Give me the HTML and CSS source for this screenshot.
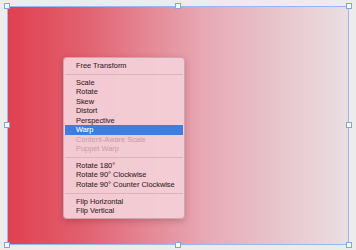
FILE: index.html
```html
<!DOCTYPE html>
<html>
<head>
    <title>Transform</title>
    <link rel="stylesheet" href="styles.css">
</head>
<body>
    <div class="canvas">
        <span class="handle h-tl"></span>
        <span class="handle h-tm"></span>
        <span class="handle h-tr"></span>
        <span class="handle h-ml"></span>
        <span class="handle h-mr"></span>
        <span class="handle h-bl"></span>
        <span class="handle h-bm"></span>
        <span class="handle h-br"></span>

        <ul class="context-menu">
            <li>Free Transform</li>
            <li class="sep"></li>
            <li>Scale</li>
            <li>Rotate</li>
            <li>Skew</li>
            <li>Distort</li>
            <li>Perspective</li>
            <li class="active">Warp</li>
            <li class="disabled">Content-Aware Scale</li>
            <li class="disabled">Puppet Warp</li>
            <li class="sep"></li>
            <li>Rotate 180°</li>
            <li>Rotate 90° Clockwise</li>
            <li>Rotate 90° Counter Clockwise</li>
            <li class="sep"></li>
            <li>Flip Horizontal</li>
            <li>Flip Vertical</li>
        </ul>
    </div>
</body>
</html>
```

FILE: styles.css
```css
body {
    margin: 0;
    padding: 6px 7px;
    background-color: #ececec;
    font-family: "Liberation Sans", Arial, sans-serif;
}
.canvas {
    position: relative;
    width: 340px;
    height: 237px;
    border: 1px solid #9db5f0;
    background: linear-gradient(to right, #e1404f 0%, #e2606f 22%, #e7a9b4 58%, #e9dfe1 100%);
}
.handle {
    position: absolute;
    width: 4px;
    height: 4px;
    background: #fafafa;
    border: 1px solid #8aa2d6;
}
.h-tl { left: -4px; top: -4px; }
.h-tm { left: 167px; top: -4px; }
.h-tr { right: -4px; top: -4px; }
.h-ml { left: -4px; top: 115px; }
.h-mr { right: -4px; top: 115px; }
.h-bl { left: -4px; bottom: -4px; }
.h-bm { left: 167px; bottom: -4px; }
.h-br { right: -4px; bottom: -4px; }

.context-menu {
    position: absolute;
    left: 55px;
    top: 50px;
    width: 118px;
    margin: 0;
    padding: 3px 1px 2px;
    list-style: none;
    background: rgba(244, 206, 214, 0.96);
    border: 0.5px solid rgba(150, 90, 100, 0.35);
    border-radius: 4px;
    box-shadow: 0 2px 6px rgba(80, 20, 30, 0.25);
    font-size: 7.4px;
    color: #3b2529;
}
.context-menu li {
    height: 9.55px;
    line-height: 9.55px;
    padding-left: 11px;
    white-space: nowrap;
    -webkit-text-stroke: 0.08px #3b2529;
}
.context-menu li.active {
    background: #3b7fe2;
    color: #ffffff;
    -webkit-text-stroke: 0.08px #ffffff;
}
.context-menu li.disabled {
    color: #c99aa4;
    -webkit-text-stroke: 0;
}
.context-menu li.sep {
    height: 7px;
    padding: 0;
    position: relative;
}
.context-menu li.sep::after {
    content: "";
    position: absolute;
    left: 0;
    right: 0;
    top: 3px;
    border-top: 1px solid #dcb2bb;
}
```
